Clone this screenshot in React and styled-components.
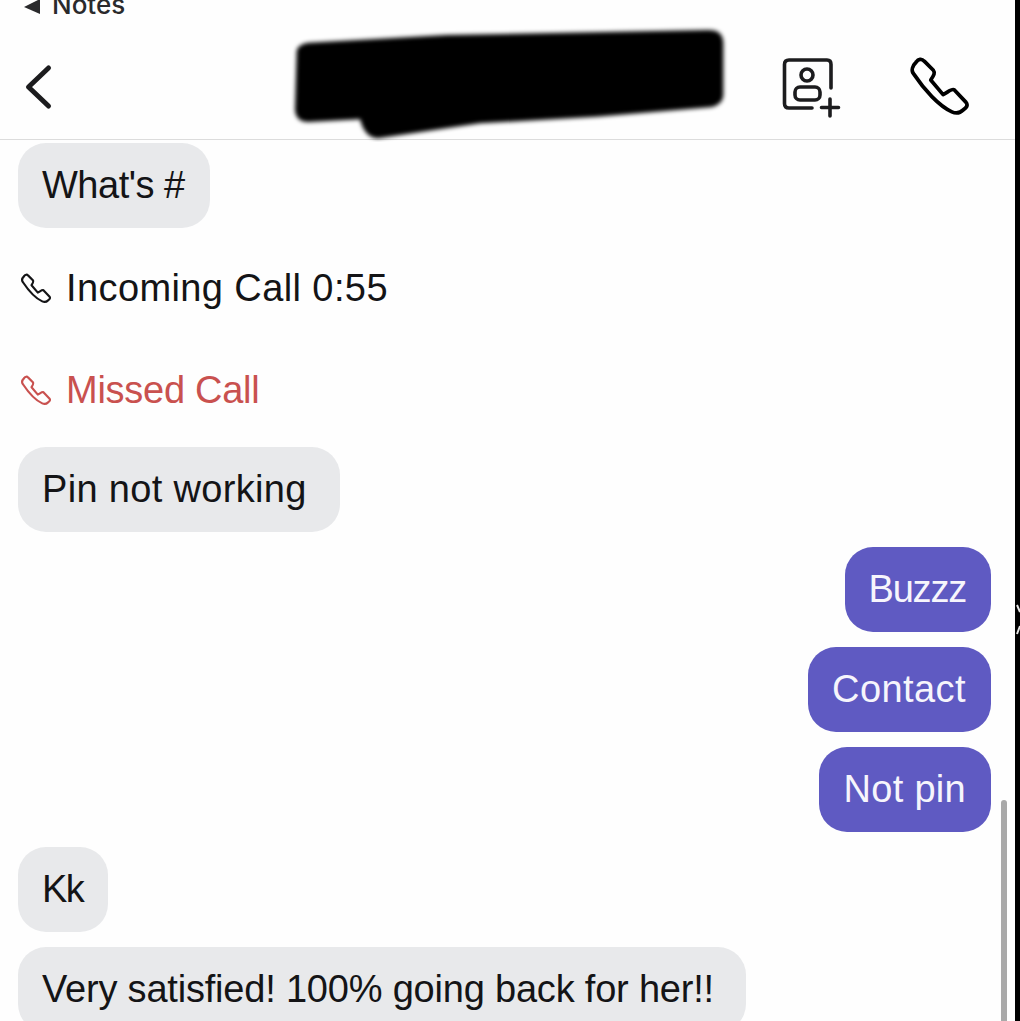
import React from 'react'
import styled, { createGlobalStyle } from 'styled-components'

const GlobalStyle = createGlobalStyle`
  html, body {
    margin: 0;
    padding: 0;
    background: #000;
  }
`

const Page = styled.div`
  display: flex;
  width: 1020px;
  height: 1021px;
  overflow: hidden;
  background: #000;
  font-family: 'Liberation Sans', Arial, sans-serif;
`

const Screen = styled.div`
  position: relative;
  display: flex;
  flex-direction: column;
  width: 1015px;
  height: 100%;
  overflow: hidden;
  background: #fefefe;
`

const EdgeStrip = styled.div`
  position: relative;
  flex: 1;
  background: #000;
`

const EdgeMark = styled.svg`
  position: absolute;
  top: 604px;
  left: 0;
`

const StatusBar = styled.div`
  display: flex;
  align-items: flex-end;
  gap: 11px;
  height: 18px;
  padding-left: 24px;
  overflow: hidden;
  flex-shrink: 0;
`

const NotesLabel = styled.span`
  font-family: 'Inter', 'Liberation Sans', sans-serif;
  font-size: 26px;
  line-height: 26px;
  font-weight: 500;
  color: #2a2a2c;
`

const Header = styled.header`
  display: flex;
  align-items: center;
  height: 122px;
  box-sizing: border-box;
  padding: 16px 0 0 20px;
  border-bottom: 1px solid #dcdcdc;
  flex-shrink: 0;
`

const BackIcon = styled.svg`
  flex-shrink: 0;
`

const Redaction = styled.svg`
  flex-shrink: 0;
  align-self: flex-start;
  margin: -9px 0 0 234px;
`

const AddIcon = styled.svg`
  flex-shrink: 0;
  margin-left: 48px;
  overflow: visible;
`

const PhoneGlyph = styled.svg`
  flex-shrink: 0;
  margin-left: ${props => props.$offset || 0}px;
`

const Thread = styled.div`
  display: flex;
  flex-direction: column;
  gap: 15px;
  padding: 3px 24px 0 18px;
`

const Bubble = styled.div`
  align-self: ${props => (props.$mine ? 'flex-end' : 'flex-start')};
  display: flex;
  align-items: center;
  height: 85px;
  box-sizing: border-box;
  padding: 0 ${props => props.$endPad || 25}px 0 24px;
  border-radius: 28px;
  flex-shrink: 0;
  font-size: 38px;
  letter-spacing: ${props => props.$track || 0}px;
  white-space: nowrap;
  color: ${props => (props.$mine ? '#f6f5fc' : '#141416')};
  background: ${props => (props.$mine ? '#5f5ac2' : '#e8e9eb')};
`

const CallRow = styled.div`
  display: flex;
  align-items: center;
  gap: 13px;
  height: 87px;
  box-sizing: border-box;
  padding: 3px 0 0 2px;
  flex-shrink: 0;
  font-size: 38px;
  letter-spacing: ${props => props.$track || 0}px;
  white-space: nowrap;
  color: ${props => (props.$missed ? '#c9514f' : '#141416')};
`

const ScrollThumb = styled.div`
  position: absolute;
  top: 800px;
  bottom: 0;
  right: 8px;
  width: 6px;
  border-radius: 3px 3px 0 0;
  background: #a9a9a9;
`

const handsetPath =
  'M18 62 C8 50 15 35 25 25 C32 15 42 13 50 22 L78 50 C84 58 80 65 70 80 L108 125 C122 118 135 105 142 110 L178 148 C186 158 180 165 170 172 C160 182 148 184 135 178 C95 160 50 110 18 62 Z'

const Handset = ({ size, weight, offset }) => (
  <PhoneGlyph
    $offset={offset}
    width={size}
    height={size}
    viewBox="0 0 200 200"
    fill="none"
    stroke="currentColor"
    strokeWidth={weight}
    strokeLinejoin="round"
  >
    <path d={handsetPath} />
  </PhoneGlyph>
)

const App = () => (
  <Page>
    <GlobalStyle />
    <Screen>
      <StatusBar>
        <svg width="17" height="18" viewBox="0 0 17 18">
          <path d="M0 7 L16 -1 V14 Z" fill="#2a2a2c" />
        </svg>
        <NotesLabel>Notes</NotesLabel>
      </StatusBar>

      <Header>
        <BackIcon width="36" height="50" viewBox="0 0 36 50" fill="none" stroke="#1c1c1e" strokeWidth="5" strokeLinecap="round" strokeLinejoin="round">
          <path d="M28.5 6 L8.5 25 L28.5 44" />
        </BackIcon>

        <Redaction width="440" height="117" viewBox="30 15 1320 351">
          <defs>
            <filter id="soft" x="-5%" y="-10%" width="110%" height="120%">
              <feGaussianBlur stdDeviation="7" />
            </filter>
          </defs>
          <path
            d="M50 92 Q55 72 85 68 L500 45 L1285 30 Q1330 30 1330 70 L1330 225 Q1328 255 1290 262 L950 290 L600 310 L295 355 Q255 355 240 298 L85 306 Q48 306 45 270 Z"
            fill="#000"
            filter="url(#soft)"
          />
        </Redaction>

        <AddIcon width="60" height="60" viewBox="0 0 60 60" fill="none" stroke="#1c1c1e" strokeWidth="3.6" strokeLinecap="round">
          <path d="M34 51 H11 Q6.5 51 6.5 46.5 V7.5 Q6.5 3 11 3 H49 Q53 3 53 7.5 V31" />
          <circle cx="29" cy="18" r="6" />
          <rect x="17" y="30" width="25" height="13" rx="5" />
          <path d="M52 42 V59 M43.5 50.5 H60.5" />
        </AddIcon>

        <Handset size={65} weight={11.5} offset={70} />
      </Header>

      <Thread>
        <Bubble $track={-0.5}>What's #</Bubble>
        <CallRow $track={0.4}>
          <Handset size={33} weight={13} />
          Incoming Call 0:55
        </CallRow>
        <CallRow $missed $track={-0.27}>
          <Handset size={33} weight={13} />
          Missed Call
        </CallRow>
        <Bubble $track={0.33} $endPad={33}>Pin not working</Bubble>
        <Bubble $mine $track={-1.2}>Buzzz</Bubble>
        <Bubble $mine $track={0.43}>Contact</Bubble>
        <Bubble $mine $track={0.3}>Not pin</Bubble>
        <Bubble $track={-1.5}>Kk</Bubble>
        <Bubble $track={-0.2} $endPad={32}>Very satisfied! 100% going back for her!!</Bubble>
      </Thread>

      <ScrollThumb />
    </Screen>
    <EdgeStrip>
      <EdgeMark width="5" height="32" viewBox="0 0 5 32" fill="none" stroke="#e8e8e8" strokeWidth="2">
        <path d="M2 1 L5 8 M5 22 L2 30" />
      </EdgeMark>
    </EdgeStrip>
  </Page>
)

export default App
